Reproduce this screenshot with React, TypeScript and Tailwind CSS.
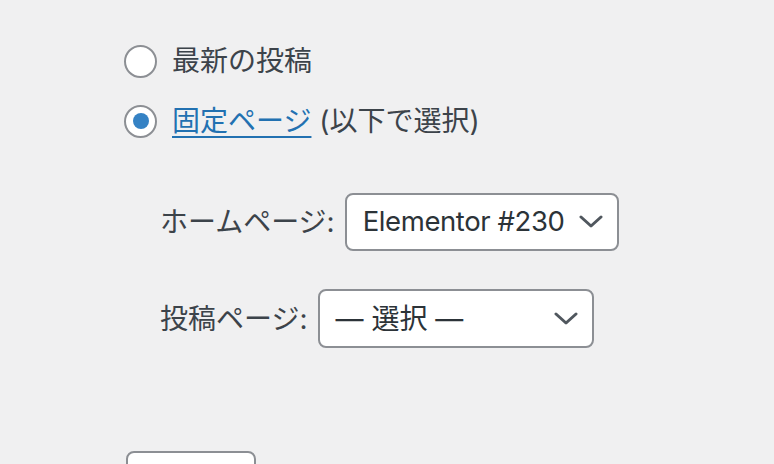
import React from "react";

const jp = { fontFamily: 'Inter, "Noto Sans CJK JP", sans-serif' };

function Chevron() {
  return (
    <svg width="24" height="24" viewBox="0 0 24 24" fill="none" className="shrink-0">
      <path d="M2 7 L12 16 L22 7" stroke="#50575e" strokeWidth="3" strokeLinecap="round" strokeLinejoin="round" />
    </svg>
  );
}

export default function App() {
  return (
    <div
      className="w-[774px] h-[464px] overflow-hidden bg-[#f0f0f1] text-[#3c434a] text-[28px] leading-none pl-[124px] pt-[31px]"
      style={jp}
    >
      <div className="flex flex-col">
        <label className="flex items-center h-[60px] gap-[15px]">
          <span className="w-[33px] h-[33px] rounded-full border-2 border-[#8c8f94] bg-white shrink-0" />
          <span>最新の投稿</span>
        </label>
        <label className="flex items-center h-[60px] gap-[15px]">
          <span className="w-[33px] h-[33px] rounded-full border-2 border-[#8c8f94] bg-white shrink-0 flex items-center justify-center">
            <span className="w-[16px] h-[16px] rounded-full bg-[#3582c4]" />
          </span>
          <span>
            <a className="text-[#2271b1] underline decoration-[2px] underline-offset-[5px]">固定ページ</a>{" "}
            (以下で選択)
          </span>
        </label>
      </div>

      <div className="flex flex-col pl-[36px] mt-[42px] gap-[38px]">
        <div className="flex items-center gap-[10px]">
          <span>ホームページ:</span>
          <div className="w-[274px] h-[58px] rounded-[8px] border-2 border-[#8c8f94] bg-white flex items-center justify-between gap-[8px] pl-[16px] pr-[14px] text-[#2c3338]">
            <span className="tracking-[-0.4px] text-[27.5px]">Elementor #230</span>
            <Chevron />
          </div>
        </div>
        <div className="flex items-center gap-[10px]">
          <span>投稿ページ:</span>
          <div className="w-[276px] h-[59px] rounded-[8px] border-2 border-[#8c8f94] bg-white flex items-center justify-between pl-[16px] pr-[14px] text-[#2c3338]">
            <span>— 選択 —</span>
            <Chevron />
          </div>
        </div>
      </div>

      <div className="mt-[103px] ml-[2px] w-[130px] h-[60px] rounded-[8px] border-2 border-[#8c8f94] bg-white" />
    </div>
  );
}
